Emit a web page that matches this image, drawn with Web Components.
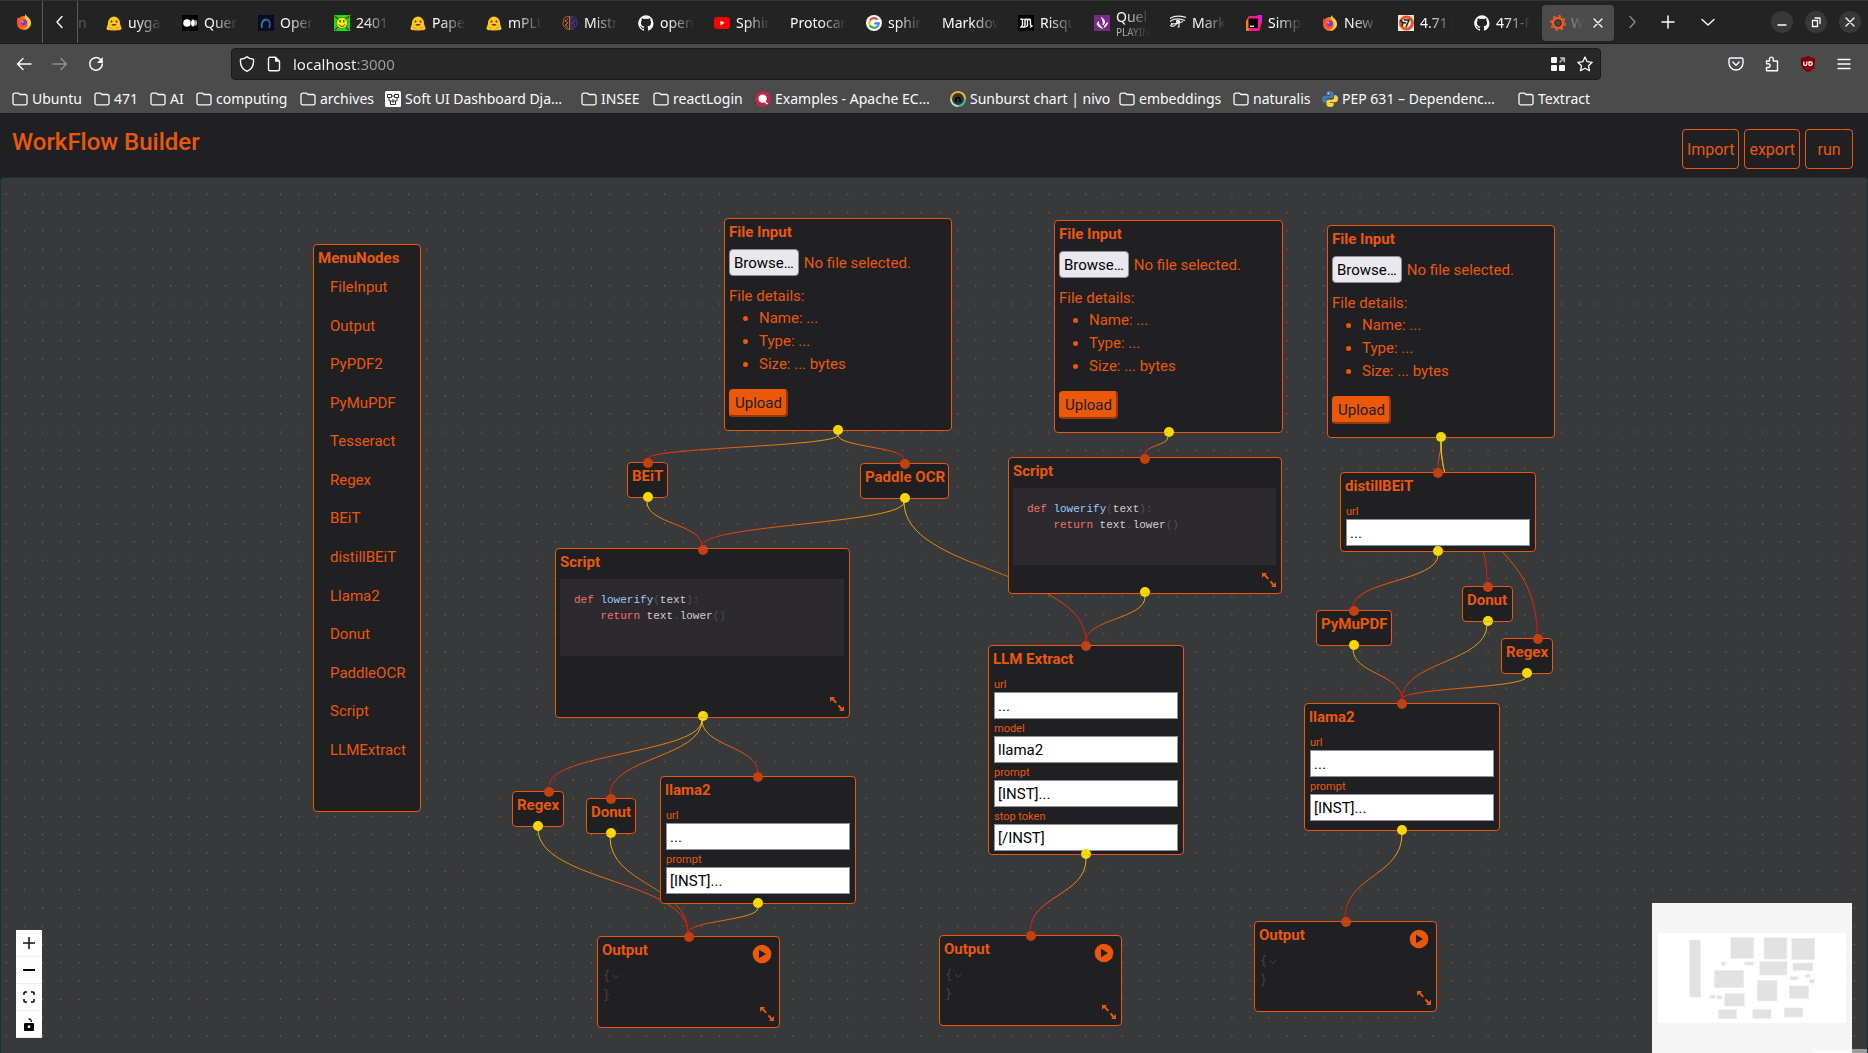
<!DOCTYPE html>
<html lang="en">
<head>
<meta charset="utf-8">
<title>WorkFlow Builder</title>
<style>
  html, body { margin: 0; height: 100%; overflow: hidden; background: #202022; }
  body { display: flex; flex-direction: column; font-family: Roboto, sans-serif; color: #ea580c; }
  workflow-app { flex: 1; min-height: 0; }
</style>
</head>
<body>
<browser-chrome></browser-chrome>
<workflow-app></workflow-app>

<script>
const define = (name, html, setup) => {
  const template = document.createElement('template');
  template.innerHTML = html;
  customElements.define(name, class extends HTMLElement {
    constructor() {
      super();
      this.attachShadow({ mode: 'open' }).append(template.content.cloneNode(true));
    }
    connectedCallback() { if (setup) setup(this, this.shadowRoot); }
  });
};

/* ---------- icons ---------- */
const line = 'fill="none" stroke="currentColor" stroke-linecap="round" stroke-linejoin="round"';
const fox = '<circle cx="8" cy="9" r="7" fill="#ff6a1f"/><path d="M9.500 0c1 3 5.500 4.500 5.500 9.500-1 4-4 6.500-7.500 6 5-2 6-8 1-11.500z" fill="#ffd23a"/><path d="M1.500 3.500L3.500 5 6 4.500 4 8l3 2 3-2c1 4-2 5.500-4 5C2 13 0 9 1.500 3.500z" fill="#ff4b3e"/><circle cx="8" cy="8.500" r="3" fill="#7a3fd0"/><path d="M4 6.500l4 .5-1.500 2z" fill="#ff9a28"/>';
const hug = '<path d="M2 8a6 6.500 0 0 1 12 0c0 2 1.500 4 1.500 5.500 0 1.500-2 2-3.500 1.500-1.500.8-6.500.8-8 0-1.500.5-3.500 0-3.500-1.500C.5 12 2 10 2 8z" fill="#ffc61c"/><circle cx="5.500" cy="6.500" r="1" fill="#3a3b45"/><circle cx="10.500" cy="6.500" r="1" fill="#3a3b45"/><path d="M5.500 9h5c-.5 2.500-4.500 2.500-5 0z" fill="#8a3b2a"/><path d="M3 13c1-1 3 0 3.500 1.500M13 13c-1-1-3 0-3.500 1.500" stroke="#f09a1a" fill="none"/>';
const cat = '<path d="M8 .2a8 8 0 0 0-2.600 15.500c.4.1.6-.2.6-.4v-1.500c-2.200.5-2.700-1-2.700-1-.4-.9-.9-1.200-.9-1.200-.7-.5.1-.5.1-.5.8.1 1.200.9 1.200.9.7 1.200 1.900.9 2.300.6.100-.5.3-.9.5-1.100-1.800-.2-3.600-.9-3.600-4 0-.9.3-1.600.8-2.100-.1-.2-.4-1 .1-2.100 0 0 .7-.2 2.200.8a7.700 7.700 0 0 1 4 0c1.500-1 2.200-.8 2.200-.8.4 1.100.2 1.900.1 2.100.5.6.8 1.300.8 2.100 0 3.100-1.900 3.700-3.700 3.900.3.300.6.800.6 1.500v2.200c0 .2.100.5.600.4A8 8 0 0 0 8 .2z" fill="#fff"/>';
const art = {
  firefox: fox,
  hug,
  github: cat,
  medium: '<path d="M0 0h16v16H0z" fill="#000"/><circle cx="5" cy="8" r="3.800" fill="#fff"/><ellipse cx="11" cy="8" rx="1.900" ry="3.600" fill="#fff"/><ellipse cx="14" cy="8" rx=".7" ry="3.200" fill="#fff"/>',
  arch: '<path d="M0 0h16v16H0z" fill="#0b0a24"/><path d="M4 13c-1-5 1-8.500 4-8.500" fill="none" stroke="#168a9c" stroke-width="1.800"/><path d="M8 4.500c3.500 0 5 4 3 8.500" fill="none" stroke="#2a62a8" stroke-width="1.800"/>',
  smiley: '<path d="M0 0h16v16H0z" fill="#00e51b"/><path d="M1 1l3 3M15 1l-3 3M1 15l3-3M15 15l-3-3" stroke="#a3231b" stroke-width="1.500"/><circle cx="8" cy="8" r="5.500" fill="#fff200" stroke="#4c6b00" stroke-width=".7"/><path d="M6.200 5v2.500M9.800 5v2.500" stroke="#222" stroke-width="1.200"/><path d="M5 9.500c1.500 2.500 4.500 2.500 6 0" stroke="#222" fill="none"/>',
  brain: '<g fill="none" stroke-width="1"><path d="M7.500 1v14M7 2C3 1 1 4 2 6c-2 2-1 5 1 6 1 2 3 2.500 4 2M6 4L3 6l3 2-3 2 3 2" stroke="#c4701c"/><path d="M9 1v14M9 2c4-1 6 2 5 4 2 2 1 5-1 6-1 2-3 2.500-4 2M10 4l3 2-3 2 3 2-3 2" stroke="#5a37b0"/></g>',
  youtube: '<rect y="2" width="16" height="12" rx="3" fill="#f00"/><path d="M6.500 5.500v5L10.500 8z" fill="#fff"/>',
  google: '<circle cx="8" cy="8" r="8" fill="#fff"/><g fill="none" stroke-width="2.200"><path d="M11.500 4.500A4.800 4.800 0 0 0 3.900 5.600" stroke="#ea4335"/><path d="M3.900 5.600a4.800 4.800 0 0 0 0 4.800" stroke="#fbbc05"/><path d="M3.900 10.400a4.800 4.800 0 0 0 7.200 1.200" stroke="#34a853"/><path d="M11.100 11.600A4.600 4.600 0 0 0 12.800 8.300H8.200" stroke="#4285f4"/></g>',
  monde: '<path d="M0 0h16v16H0z" fill="#000"/><path d="M3 4c1.500 0 1.500 1 1.500 2v4L3 12h4V4.500M7 5c2-1.500 2.500 0 2.500 1v4l-1 2M9.500 5c2-1.500 3 0 3 1v4l1.500 1-2 1.500" fill="none" stroke="#fff" stroke-width="1.400"/><path d="M2 4.200h11" stroke="#fff"/>',
  radio: '<path d="M0 0h16v16H0z" fill="#772b87"/><path d="M7.500 2.500c3 2 4.500 5 1.500 7.500.8-3-.5-4.500-1.500-7.500zM8.500 13.500C5.500 12 1 10 4.500 6.500 4 9.500 6.500 10.500 8.500 13.500zM10 12.500c2-1 3.500-3 3.500-5-1.500 1-3 3-3.500 5z" fill="#fff" stroke="#fff" stroke-width=".8"/>',
  eye: '<g fill="none" stroke="#eee" stroke-width="1.200"><path d="M0 3.500c4-3 10-3 16-1M0 6.500c4-3 9-3.500 15-1M1 8.500c4 1 8 0 12-2"/><circle cx="8" cy="6.500" r="1.500" fill="#eee"/><path d="M9 8v3.500c0 1-1 1-1 0M7 8.500C5 11 3 12 1 11c-1-1 1-2 1.500-1"/></g>',
  jetbrains: '<path d="M3 1h8l5-1v7l-3 9H0V6z" fill="#ff1a88"/><path d="M0 6l3-4v14H0z" fill="#ff7a1a"/><path d="M11 0h5v7z" fill="#d31aff"/><path d="M2.500 3.500h9.500v9.500H2.500z" fill="#000"/><path d="M4 11.300h4" stroke="#fff" stroke-width="1.200"/>',
  seven: '<path d="M0 0h16v16H0z" fill="#efe6d0"/><circle cx="8.500" cy="8" r="6" fill="none" stroke="#e4572b" stroke-width="3"/><path d="M2 5l3 3-1 3M6 5h5L8 12M3 7l5 1" fill="none" stroke="#232323" stroke-width="1.500"/>',
  gear: '<g fill="none" stroke="#f15a22"><circle cx="8" cy="8" r="5" stroke-width="2.600"/><circle cx="8" cy="8" r="7.200" stroke-width="1.600" stroke-dasharray="2.830 2.830"/></g><circle cx="8" cy="8" r="3.200" fill="none" stroke="#3a2a26" stroke-width="1"/>',
  folder: `<path d="M1 4.500v7.500a1.800 1.800 0 0 0 1.800 1.800h10.400a1.800 1.800 0 0 0 1.800-1.800V5.300a1.800 1.800 0 0 0-1.800-1.800H8L6.600 2.200H2.800A1.800 1.800 0 0 0 1 4z" ${line} stroke-width="1.300"/>`,
  django: '<rect width="16" height="16" rx="1.500" fill="#fff"/><g fill="none" stroke="#333"><path d="M2.500 3.500h4v3h-4zM9.500 3.500h4v3h-4zM6.500 5h3M4 6.500v3.500h8V6.500M5.500 10v3.500h5V10M8 8v4"/></g>',
  apache: '<circle cx="8" cy="8" r="8" fill="#b8284c"/><circle cx="7.600" cy="7.600" r="4.200" fill="#fff"/><path d="M9 10l3.500 3" stroke="#fff" stroke-width="1.500"/>',
  nivo: '<circle cx="8" cy="8" r="6.500" fill="#333"/><g fill="none" stroke-width="2"><path d="M1 8a7 7 0 0 1 10-6.300" stroke="#f5a623"/><path d="M11 1.700A7 7 0 0 1 15 8" stroke="#e8c13a"/><path d="M15 8a7 7 0 0 1-7 7" stroke="#2cc5a8"/><path d="M8 15a7 7 0 0 1-7-7" stroke="#a5e3d8"/></g><path d="M6 11V6.500M6 8c1-2 4-2 4 .5V11" stroke="#000" fill="none" stroke-width="1.600"/>',
  python: '<path d="M8 0C5 0 4.500 1 4.500 2.500V4h4v.8H2.800C1 4.800 0 6 0 8.200s1 3.600 2.500 3.600H4V9.700c0-1.500 1-2.400 2.500-2.400h3.200c1.300 0 2-.9 2-2.100V2.500C11.700.9 10.500 0 8 0z" fill="#3f7cad"/><path d="M8.200 16c3 0 3.500-1 3.500-2.500V12h-4v-.8h5.500c1.800 0 2.800-1.200 2.800-3.400s-1-3.600-2.500-3.600h-1.300v2.100c0 1.500-1 2.400-2.500 2.400H6.500c-1.300 0-2 .9-2 2.100v2.700c0 1.600 1.200 2.500 3.700 2.500z" fill="#ffd43b"/><circle cx="6.300" cy="2.300" r=".8" fill="#fff"/>',
  left: `<path d="M10 2.500L5 8l5 5.500" ${line} stroke-width="1.400"/>`,
  right: `<path d="M6 2.500L11 8l-5 5.500" ${line} stroke-width="1.400"/>`,
  down: `<path d="M2 5.500L8 11l6-5.500" ${line} stroke-width="1.400"/>`,
  plus: `<path d="M8 2v12M2 8h12" ${line} stroke-width="1.500"/>`,
  close: `<path d="M4 4l8 8M12 4l-8 8" ${line} stroke-width="1.300"/>`,
  min: `<path d="M4 11h8" ${line} stroke-width="1.400"/>`,
  restore: `<path d="M4.500 6.500h5v6h-5zM7 4h5v5.500" ${line} stroke-width="1.300" stroke-linejoin="miter"/>`,
  back: `<path d="M15 8H1.500M7 2.500L1.500 8 7 13.500" ${line} stroke-width="1.400"/>`,
  forward: `<path d="M1 8h13.500M9 2.500L14.500 8 9 13.500" ${line} stroke-width="1.400"/>`,
  reload: `<path d="M12.500 3.500A6.300 6.300 0 1 0 14.300 8" ${line} stroke-width="1.500"/><path d="M14.800 1v6H9z" fill="currentColor"/>`,
  shield: `<path d="M8 .8C6.500 2.300 4 3 1.500 3.300 1 9 3.500 13.500 8 15.300c4.500-1.800 7-6.300 6.500-12C12 3 9.500 2.300 8 .8z" ${line} stroke-width="1.400"/>`,
  page: `<path d="M9.500 1.200H4a1.500 1.500 0 0 0-1.500 1.500v10.600A1.500 1.500 0 0 0 4 14.800h8a1.500 1.500 0 0 0 1.500-1.500V5.200z" ${line} stroke-width="1.400"/><path d="M9 1v4.700h4.500z" fill="currentColor"/>`,
  apps: '<g fill="currentColor"><rect x="1" y="1" width="6" height="6" rx="1"/><rect x="1" y="9" width="6" height="6" rx="1"/><rect x="9" y="9" width="6" height="6" rx="1"/></g><path d="M10 2h4.300v4.300M14 2L9.500 6.500" fill="none" stroke="#bbb" stroke-width="1.600"/>',
  star: `<path d="M8 1l2.200 4.700 5 .6-3.700 3.500 1 5L8 12.300l-4.500 2.500 1-5L.8 6.300l5-.6z" ${line} stroke-width="1.300"/>`,
  pocket: `<path d="M2.500 2h11A1.500 1.500 0 0 1 15 3.500V7A7 7 0 0 1 1 7V3.500A1.500 1.500 0 0 1 2.500 2zM4.800 6l3.200 3.200L11.200 6" ${line} stroke-width="1.400"/>`,
  puzzle: `<path d="M5.500 5V3a1.900 1.900 0 0 1 3.800 0v2h4.200v9.800H2.500V11.500h1.700a1.900 1.900 0 0 0 0-3.800H2.500V5z" ${line} stroke-width="1.400"/>`,
  ublock: '<path d="M8 0c2 1.300 4.500 2 7 2v6c0 4-3 6.500-7 8-4-1.500-7-4-7-8V2c2.500 0 5-.7 7-2z" fill="#800000"/><path d="M3.800 5.500V8a1.500 1.500 0 0 0 3 0V5.500M9 5.500v4M9 6h1.500a1.600 1.600 0 0 1 0 3.400H9" fill="none" stroke="#fff" stroke-width="1.300"/>',
  menu: `<path d="M2 3.500h12M2 8h12M2 12.500h12" ${line} stroke-width="1.400"/>`
};
define('ui-icon', `<style>:host{display:block;flex:none;width:16px;height:16px}svg{display:block;width:100%;height:100%}</style><svg viewBox="0 0 16 16" aria-hidden="true"></svg>`,
  (el, root) => { root.querySelector('svg').innerHTML = art[el.getAttribute('name')]; });

/* ---------- browser window ---------- */
define('browser-tab', `<style>
  :host{display:block;flex:0 0 76px;min-width:0;box-sizing:border-box;padding:4px 2px}
  .tab{display:flex;align-items:center;gap:6px;height:36px;padding:0 8px;border-radius:4px;box-sizing:border-box}
  :host([active]) .tab{background:#4b4b4b;gap:5px;padding-right:8px}
  .text{flex:1;min-width:0;overflow:hidden;white-space:nowrap;font-size:14px;line-height:18px;
    -webkit-mask-image:linear-gradient(90deg,#000 calc(100% - 26px),transparent)}
  :host([active]) .text{color:#c9c9c9}
  small{display:block;font-size:10px;line-height:12px;color:#b4b4b4}
  button{display:none;border:0;background:none;padding:0;color:inherit}
  :host([active]) button{display:block}
</style><div class="tab"><slot name="icon"></slot><div class="text"><slot></slot><small hidden></small></div><button aria-label="Close tab"><ui-icon name="close"></ui-icon></button></div>`,
  (el, root) => {
    const sub = el.getAttribute('sub'), small = root.querySelector('small');
    small.style.display = sub ? '' : 'none';
    if (sub) { small.hidden = false; small.textContent = sub; }
  });

define('book-mark', `<style>:host{display:block;flex:none;width:var(--w)}a{display:flex;align-items:center;gap:4px;color:inherit;text-decoration:none;white-space:nowrap;font-size:14px;line-height:20px}</style><a href="#"><slot name="icon"></slot><span><slot></slot></span></a>`,
  el => el.style.setProperty('--w', el.getAttribute('w') + 'px'));

const tabs = [['hug','uyga'],['medium','Quer'],['arch','Oper'],['smiley','2401'],['hug','Pape'],['hug','mPLU'],['brain','Mistr'],['github','open'],['youtube','Sphin'],['','Protocar'],['google','sphin'],['','Markdow'],['monde','Risqu'],['radio','Quel','PLAYIN'],['eye','Mark'],['jetbrains','Simp'],['firefox','New'],['seven','4.71 ('],['github','471-F']];
const marks = [['folder','Ubuntu',82],['folder','471',56],['folder','AI',46],['folder','computing',104],['folder','archives',85],['django','Soft UI Dashboard Dja…',196],['folder','INSEE',72],['folder','reactLogin',102],['apache','Examples - Apache EC…',195],['nivo','Sunburst chart | nivo',169],['folder','embeddings',114],['folder','naturalis',89],['python','PEP 631 – Dependenc…',196],['folder','Textract',90]];
const ico = (n, slot) => n ? `<ui-icon name="${n}"${slot ? ' slot="icon"' : ''}></ui-icon>` : '';
const btn = (n, label, cls = '') => `<button class="${cls}" aria-label="${label}">${ico(n)}</button>`;

define('browser-chrome', `<style>
  :host{display:block;flex:none;color:#fbfbfe;background:#4b4b4b;font-family:"Noto Sans",sans-serif;border-bottom:1px solid #1c1c1c}
  button{border:0;background:none;color:inherit;padding:0;display:flex;align-items:center;justify-content:center}
  .tabs{display:flex;align-items:stretch;height:44px;box-sizing:border-box;background:#232323;border-top:1px solid #343434;border-bottom:1px solid #1a1a1a;overflow:hidden}
  .tabs>*{flex-shrink:0}
  .pin,.prev{box-sizing:border-box;border-right:1px solid #5a5a5a}
  .pin{width:43px;padding-left:6px}
  .prev{width:35px}
  .rest{width:18px;overflow:hidden;font-size:14px;line-height:44px;color:#555}
  .next{width:32px;color:#8a8a8a}
  .tool{width:40px}
  .grow{flex:1}
  .win{display:flex;gap:12px;align-items:center;padding-right:7px}
  .win button{width:22px;height:22px;border-radius:50%;background:#383838}
  .nav{display:flex;align-items:center;height:40px;padding:0 6px}
  .nav>button{width:36px;height:36px}
  .dim{color:#8f8f8f}
  .space{width:117px}
  .url{flex:1;display:flex;align-items:center;gap:11px;height:32px;box-sizing:border-box;padding:0 7px;background:#272727;border:1px solid #1a1a1a;border-radius:4px}
  .url input{flex:1;min-width:0;height:28px;border:0;outline:0;padding:0;font:15px "Noto Sans",sans-serif;
    background:linear-gradient(90deg,#fbfbfe 64px,#a0a0a0 64px);-webkit-background-clip:text;background-clip:text;-webkit-text-fill-color:transparent}
  .marks{display:flex;height:29px;align-items:center;padding-left:12px;overflow:hidden}
</style>
<div class="tabs">
  ${btn('firefox','Firefox View','pin')}${btn('left','Scroll tabs left','prev')}<span class="rest">n</span>
  ${tabs.map(([i, t, s]) => `<browser-tab${s ? ` sub="${s}"` : ''}>${ico(i, 1)}${t}</browser-tab>`).join('')}
  <browser-tab active>${ico('gear', 1)}Wo</browser-tab>
  ${btn('right','Scroll tabs right','next')}${btn('plus','New tab','tool')}${btn('down','List all tabs','tool')}
  <span class="grow"></span>
  <div class="win">${btn('min','Minimize')}${btn('restore','Restore')}${btn('close','Close')}</div>
</div>
<div class="nav">
  ${btn('back','Back')}${btn('forward','Forward','dim')}${btn('reload','Reload')}<span class="space"></span>
  <div class="url">${ico('shield')}${ico('page')}<input aria-label="Address" value="localhost:3000">${btn('apps','Open app')}${btn('star','Bookmark')}</div>
  <span class="space"></span>${btn('pocket','Pocket')}${btn('puzzle','Extensions')}${btn('ublock','uBlock Origin')}${btn('menu','Menu')}
</div>
<div class="marks">${marks.map(([i, t, w]) => `<book-mark w="${w}">${ico(i, 1)}${t}</book-mark>`).join('')}</div>`);

/* ---------- flow editor ---------- */
const TOP = 177;
define('flow-node', `<style>
  :host{position:absolute;box-sizing:border-box;display:flex;flex-direction:column;padding:2px 4px;background:#202022;border:1px solid #ea580c;border-radius:4px;color:#ea580c;font-size:15px;line-height:22px}
  .head{font-weight:700;white-space:nowrap}
  i{position:absolute;width:10px;height:10px;border-radius:50%;transform:translate(-50%,-50%)}
  .in{background:#c2410c;top:0;left:50%}
  .out{background:#ffd700;top:100%;left:50%}
  :host([tall]) .in{top:1px}
  :host([tall]) .out{top:calc(100% - 1px)}
  .size{position:absolute;right:3px;bottom:4px;width:18px;height:18px;cursor:nwse-resize}
</style><div class="head"></div><slot></slot>
<svg class="size" viewBox="0 0 18 18" aria-hidden="true"><path d="M2 2h5L5.600 3.400 9 7.300 7.600 8.500 4 4.800 2 7zM16 16h-5l1.600-1.600L9.700 11l1.400-1.200 3.100 3.300L16 11z" fill="#ea580c"/></svg><i class="in"></i><i class="out"></i>`,
  (el, root) => {
    const at = n => el.getAttribute(n);
    Object.assign(el.style, { left: at('x') + 'px', top: at('y') - TOP + 'px', width: at('w') + 'px', height: at('h') + 'px' });
    root.querySelector('.head').textContent = at('name');
    const ports = at('ports');
    if (!ports.includes('i')) root.querySelector('.in').remove();
    if (!ports.includes('o')) root.querySelector('.out').remove();
    if (at('in')) root.querySelector('.in').style.left = at('in') + 'px';
    if (!el.hasAttribute('sizable')) root.querySelector('.size').remove();
  });

define('file-form', `<style>
  :host{display:flex;flex-direction:column;align-items:flex-start}
  .pick{display:flex;align-items:center;gap:5px;margin:6px 0 9px}
  button{font:15px/22px Roboto,sans-serif;box-sizing:border-box;border-radius:4px}
  .pick button{height:27px;padding:0 4px;background:#e9e9ed;border:1px solid #8f8f9d;color:#000}
  ul{margin:0 0 13px;padding-left:30px;line-height:23px}
  .up{height:28px;padding:0 4px;background:#ea580c;border:2px outset #ea580c;color:#202022}
</style>
<div class="pick"><button type="button">Browse…</button><input type="file" hidden aria-label="File"><span>No file selected.</span></div>
<div>File details:</div><ul><li>Name: ...</li><li>Type: ...</li><li>Size: ... bytes</li></ul>
<button class="up" type="button">Upload</button>`,
  (el, root) => root.querySelector('.pick button').addEventListener('click', () => root.querySelector('input').click()));

define('node-field', `<style>
  :host{display:block;margin:0 1px 3px}
  :host(:first-of-type){margin-top:8px}
  label{display:block;font-size:11px;line-height:14px}
  input{display:block;box-sizing:border-box;width:100%;height:27px;padding:0 3px;border:1px solid #8f8f9d;border-radius:0;background:#fff;color:#000;font:15px Roboto,sans-serif}
</style><label for="f"></label><input id="f">`,
  (el, root) => {
    root.querySelector('label').textContent = el.getAttribute('label');
    root.querySelector('input').value = el.getAttribute('value');
  });

define('code-editor', `<style>
  :host{display:block;margin:6px 1px 0 0;height:77px;box-sizing:border-box;padding:13px 14px;background:#2c2a2f}
  pre{margin:0;font:11px/16px "Liberation Mono",monospace;color:#d0d0d0}
  .k{color:#f47067}.f{color:#9fcbf5}.p{color:#505056}
</style><pre><code style="font:inherit"><span class="k">def</span> <span class="f">lowerify</span><span class="p">(</span>text<span class="p">):</span>
    <span class="k">return</span> text<span class="p">.</span>lower<span class="p">()</span></code></pre>`);

define('json-output', `<style>
  :host{display:block;color:#404145}
  button{position:absolute;right:7px;top:7px;width:20px;height:20px;padding:0;border:0;background:none}
  svg{display:block}
  .row{display:flex;align-items:center;gap:2px;padding-left:1px;font:12px/19px "DejaVu Sans Mono",monospace}
  .body{padding-top:6px}
</style><button aria-label="Run"><svg width="20" height="20" viewBox="0 0 20 20"><circle cx="10" cy="10" r="9.300" fill="#ea580c"/><path d="M7 5.800v8.400l7-4.200z" fill="#202022"/></svg></button>
<div class="body"><div class="row"><span>{</span><svg width="8" height="6" viewBox="0 0 8 6" fill="none" stroke="currentColor"><path d="M1 1l3 3.500L7 1"/></svg></div><div class="row"><span>}</span></div></div>`);

const menuItems = ['FileInput','Output','PyPDF2','PyMuPDF','Tesseract','Regex','BEiT','distillBEiT','Llama2','Donut','PaddleOCR','Script','LLMExtract'];
define('node-menu', `<style>
  :host{display:block;flex:1}
  ul{display:flex;flex-direction:column;justify-content:space-between;list-style:none;box-sizing:border-box;margin:0;padding:7px 0 0 12px;height:492px}
</style><ul>${menuItems.map(t => `<li>${t}</li>`).join('')}</ul>`);

const edges = [
  [838,431,647,463],[838,431,904,463],[647,498,702,550],[904,498,702,550],[904,498,1086,645],
  [1168,433,1145,458],[1145,593,1086,645],[1441,438,1438,473],[1441,438,1487,586],[1441,438,1537,638],
  [1438,551,1353,611],[1353,645,1402,703],[1487,621,1402,703],[1526,673,1402,703],
  [702,716,549,790],[702,716,610,799],[702,716,758,777],[538,825,688,937],[610,833,688,937],[758,904,688,937],
  [1086,855,1030,936],[1402,830,1345,922]
];
define('flow-edges', `<style>:host{position:absolute;inset:0}svg{display:block;width:100%;height:100%}</style>
<svg aria-hidden="true"><defs><linearGradient id="g" x1="0" y1="0" x2="0" y2="1"><stop offset="0" stop-color="#ffd700" stop-opacity=".85"/><stop offset="1" stop-color="#f00" stop-opacity=".9"/></linearGradient></defs>
${edges.map(([a, b, c, d]) => { const s = b + 4 - TOP, e = d - 4 - TOP, m = (s + e) / 2; return `<path d="M${a} ${s}C${a} ${m} ${c} ${m} ${c} ${e}" fill="none" stroke="url(#g)"/>`; }).join('')}</svg>`);

define('flow-controls', `<style>
  :host{position:absolute;left:16px;bottom:15px;display:flex;flex-direction:column;background:#fefefe}
  button{width:26px;height:27px;box-sizing:border-box;border:0;border-bottom:1px solid #eee;background:#fefefe;padding:0;display:grid;place-items:center}
</style>
<button aria-label="Zoom in"><svg width="12" height="12"><path d="M6 0v12M0 6h12" stroke="#111" stroke-width="1.500"/></svg></button>
<button aria-label="Zoom out"><svg width="12" height="12"><path d="M0 6h12" stroke="#000" stroke-width="2"/></svg></button>
<button aria-label="Fit view"><svg width="12" height="12" fill="none" stroke="#000" stroke-width="1.500"><path d="M1 4V2q0-1 1-1h2M8 1h2q1 0 1 1v2M11 8v2q0 1-1 1H8M4 11H2q-1 0-1-1V8"/></svg></button>
<button aria-label="Toggle interactivity"><svg width="10" height="13" viewBox="0 0 10 13"><path d="M4.500 1q2.500-.5 3 3" fill="none" stroke="#000" stroke-width="1.200"/><rect y="5" width="10" height="8" rx="1" fill="#000"/><rect x="3.800" y="7.500" width="2.400" height="2.400" fill="#fff"/></svg></button>`);

const boxes = [[269,180,33,171],[392,172,69,63],[492,173,69,64],[575,175,69,64],[364,246,12,10],[434,246,27,9],[479,244,82,41],[579,249,59,23],[343,271,88,52],[571,290,23,10],[615,283,15,10],[628,298,14,11],[473,301,58,62],[568,318,58,38],[330,345,15,10],[351,347,15,10],[374,340,59,38],[355,389,55,27],[458,388,55,27],[553,384,55,27]];
define('mini-map', `<style>:host{position:absolute;right:16px;bottom:0;width:200px;height:150px}svg{display:block}</style>
<svg width="200" height="150" viewBox="156 69 600 450" aria-hidden="true"><path d="M156 69h600v450H156z" fill="#f5f5f5"/><path d="M174 159h564v270H174z" fill="#fff"/>
${boxes.map(([x, y, w, h]) => `<rect x="${x}" y="${y}" width="${w}" height="${h}" fill="#e2e2e2" stroke="#eee" stroke-width="2"/>`).join('')}</svg>`);

const node = (name, x, y, w, h, ports, body = '', extra = '') => `<flow-node name="${name}" x="${x}" y="${y}" w="${w}" h="${h}" ports="${ports}" ${extra}>${body}</flow-node>`;
const field = (l, v) => `<node-field label="${l}" value="${v}"></node-field>`;
const url = field('url', '...'), prompt = field('prompt', '[INST]...');
define('flow-canvas', `<style>
  :host{display:block;position:relative;overflow:hidden;box-sizing:border-box;border:1px solid #17323a;border-bottom:0;border-radius:4px 4px 0 0;background:#38393b}
  .plane{position:absolute;inset:-1px -1px 0}
  .dots{display:block;width:100%;height:100%}
  .credit{position:absolute;right:1px;bottom:0;width:55px;height:4px;background:rgba(255,255,255,.5)}
</style>
<div class="plane">
  <svg class="dots" aria-hidden="true"><defs><pattern id="d" x="5.500" y="16.700" width="18.297" height="18.297" patternUnits="userSpaceOnUse"><circle cx=".6" cy=".6" r=".6" fill="#ea580c"/></pattern></defs><rect width="100%" height="100%" fill="url(#d)"/></svg>
  <flow-edges></flow-edges>
  ${node('MenuNodes',313,244,108,568,'','<node-menu></node-menu>')}
  ${node('File Input',724,218,228,213,'o','<file-form></file-form>')}
  ${node('File Input',1054,220,229,213,'o','<file-form></file-form>')}
  ${node('File Input',1327,225,228,213,'o','<file-form></file-form>')}
  ${node('BEiT',627,462,41,36,'io')}
  ${node('Paddle OCR',860,463,89,36,'io')}
  ${node('Script',1008,457,274,137,'io','<code-editor></code-editor>','sizable tall')}
  ${node('Script',555,548,295,170,'io','<code-editor></code-editor>','sizable tall')}
  ${node('distillBEiT',1340,472,196,80,'io',url)}
  ${node('PyMuPDF',1316,610,76,36,'io')}
  ${node('Donut',1462,586,51,36,'io')}
  ${node('Regex',1501,638,52,36,'io','','in="36"')}
  ${node('LLM Extract',988,645,196,210,'io',url + field('model','llama2') + prompt + field('stop token','[/INST]'))}
  ${node('llama2',1304,703,196,128,'io',url + prompt)}
  ${node('Regex',512,791,52,36,'io','','in="36"')}
  ${node('Donut',586,798,50,36,'io')}
  ${node('llama2',660,776,196,128,'io',url + prompt)}
  ${node('Output',597,936,183,92,'i','<json-output></json-output>','sizable')}
  ${node('Output',939,935,183,91,'i','<json-output></json-output>','sizable')}
  ${node('Output',1254,921,183,91,'i','<json-output></json-output>','sizable')}
  <flow-controls></flow-controls><mini-map></mini-map><div class="credit"></div>
</div>`);

define('workflow-app', `<style>
  :host{display:flex;flex-direction:column}
  header{display:flex;justify-content:space-between;align-items:flex-start;height:63px;box-sizing:border-box;padding:15px 15px 0 12px}
  h1{margin:-1px 0 0;font-size:24px;line-height:28px;font-weight:500}
  .acts{display:flex;gap:5px}
  .acts button{height:40px;min-width:48px;padding:0 4px;background:none;border:1px solid #ea580c;border-radius:4px;color:inherit;font:16px Roboto,sans-serif}
  flow-canvas{flex:1}
</style><header><h1>WorkFlow Builder</h1><div class="acts"><button>Import</button><button>export</button><button>run</button></div></header><flow-canvas></flow-canvas>`);
</script>
</body>
</html>
